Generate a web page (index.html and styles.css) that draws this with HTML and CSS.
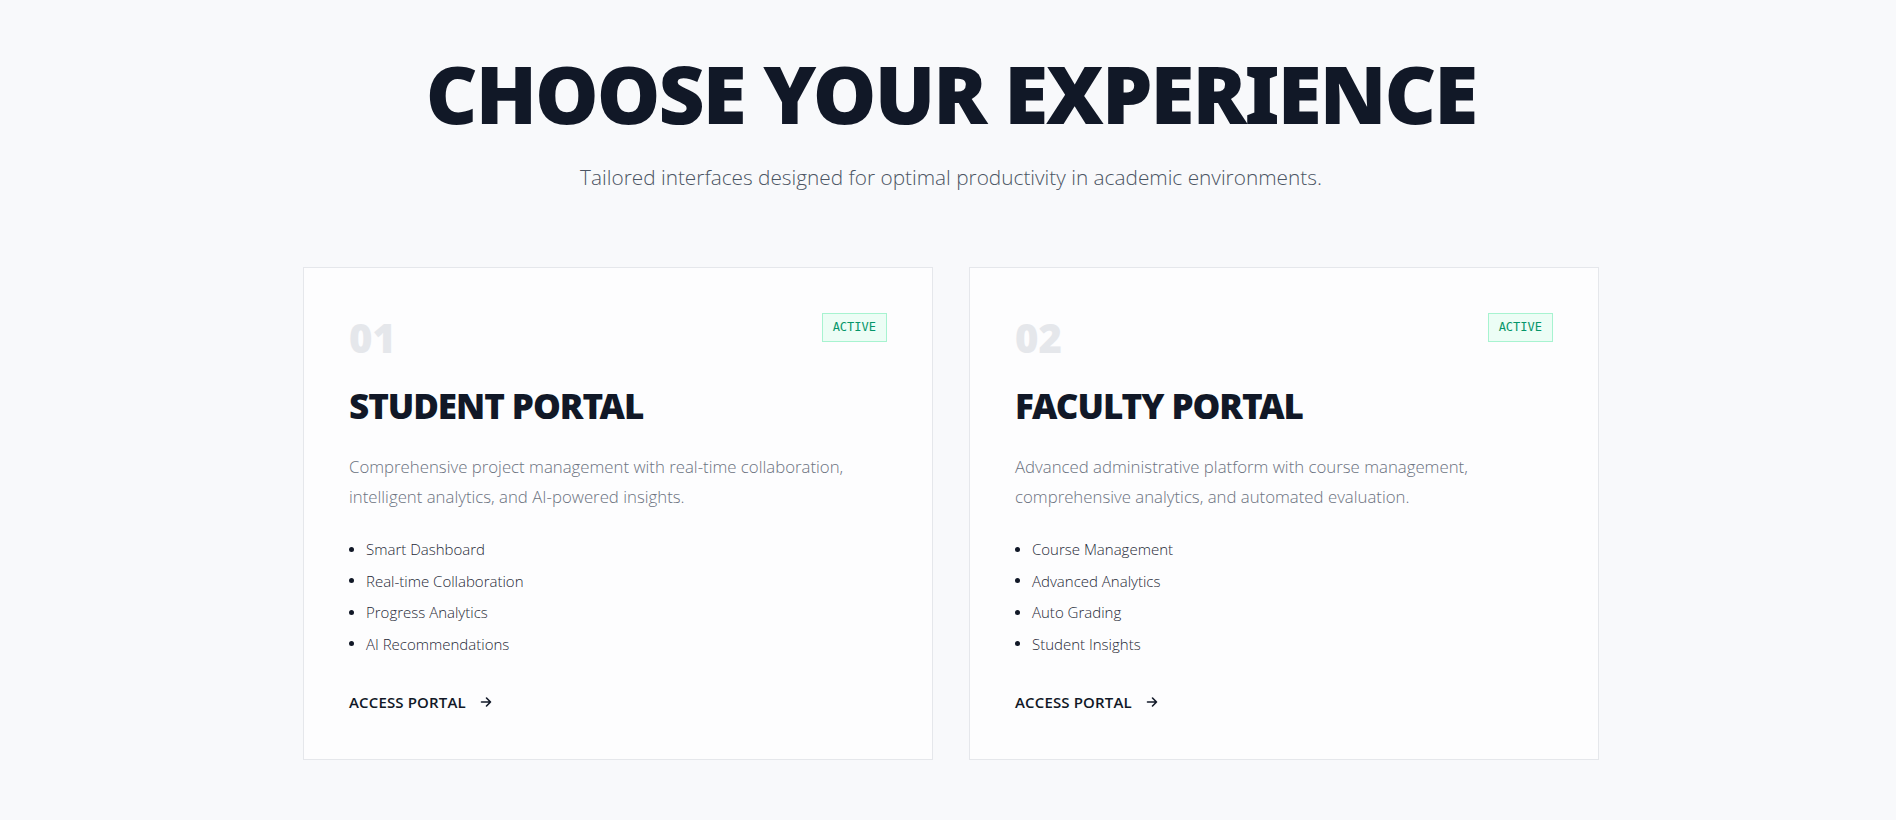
FILE: index.html
```html
<!DOCTYPE html>
<html lang="en">
<head>
<meta charset="utf-8">
<title>Choose Your Experience</title>
<link rel="stylesheet" href="styles.css">
</head>
<body>
<main class="page">
  <header class="intro">
    <h1 class="intro-title">CHOOSE YOUR EXPERIENCE</h1>
    <p class="intro-sub">Tailored interfaces designed for optimal productivity in academic environments.</p>
  </header>
  <section class="cards">
    <article class="card">
      <div class="card-top">
        <span class="card-num">01</span>
        <span class="badge">ACTIVE</span>
      </div>
      <h2 class="card-title">STUDENT PORTAL</h2>
      <p class="card-desc">Comprehensive project management with real-time collaboration, intelligent analytics, and AI-powered insights.</p>
      <ul class="features">
        <li>Smart Dashboard</li>
        <li>Real-time Collaboration</li>
        <li>Progress Analytics</li>
        <li>AI Recommendations</li>
      </ul>
      <a class="access" href="#">ACCESS PORTAL
        <svg class="arrow" width="12" height="12" viewBox="0 0 12 12" fill="none" stroke="currentColor" stroke-width="1.6" stroke-linecap="round" stroke-linejoin="round"><path d="M1.5 6h9M6.5 2l4 4-4 4"/></svg>
      </a>
    </article>
    <article class="card">
      <div class="card-top">
        <span class="card-num">02</span>
        <span class="badge">ACTIVE</span>
      </div>
      <h2 class="card-title">FACULTY PORTAL</h2>
      <p class="card-desc">Advanced administrative platform with course management, comprehensive analytics, and automated evaluation.</p>
      <ul class="features">
        <li>Course Management</li>
        <li>Advanced Analytics</li>
        <li>Auto Grading</li>
        <li>Student Insights</li>
      </ul>
      <a class="access" href="#">ACCESS PORTAL
        <svg class="arrow" width="12" height="12" viewBox="0 0 12 12" fill="none" stroke="currentColor" stroke-width="1.6" stroke-linecap="round" stroke-linejoin="round"><path d="M1.5 6h9M6.5 2l4 4-4 4"/></svg>
      </a>
    </article>
  </section>
</main>
</body>
</html>
```
FILE: styles.css
```css
* { box-sizing: border-box; }
html, body { margin: 0; padding: 0; }
body {
  background: #f8f9fb;
  font-family: "Open Sans", "Noto Sans", sans-serif;
  color: #111827;
  height: 820px;
  overflow: hidden;
}
.page {
  padding: 53px 0 0 6px;
  display: flex;
  flex-direction: column;
  align-items: center;
}
.intro { text-align: center; }
.intro-title {
  margin: 0;
  font-family: "Noto Sans", sans-serif;
  font-weight: 900;
  font-size: 80px;
  line-height: 1;
  letter-spacing: -0.025em;
  color: #111827;
}
.intro-sub {
  margin: 29px 0 0;
  font-weight: 300;
  font-size: 20.8px;
  line-height: 30px;
  color: #4b5563;
}
.cards {
  margin-top: 75px;
  display: grid;
  grid-template-columns: 630px 630px;
  gap: 36px;
}
.card {
  background: #fdfdfe;
  border: 1px solid #e5e7eb;
  padding: 45px;
  height: 493px;
  display: flex;
  flex-direction: column;
}
.card-top {
  display: flex;
  justify-content: space-between;
  align-items: flex-start;
}
.card-num {
  font-family: "Noto Sans", sans-serif;
  font-weight: 900;
  font-size: 40px;
  line-height: 1;
  color: #e5e7eb;
  margin-top: 5px;
}
.badge {
  font-family: "DejaVu Sans Mono", monospace;
  font-size: 12px;
  color: #059669;
  background: #ecfdf5;
  border: 1px solid #a7f3d0;
  padding: 7px 10px;
  line-height: 13px;
}
.card-title {
  margin: 27px 0 0;
  font-family: "Noto Sans", sans-serif;
  font-weight: 900;
  font-size: 35px;
  line-height: 1.2;
  letter-spacing: -0.03em;
  color: #111827;
}
.card-desc {
  margin: 25px 0 0;
  font-weight: 300;
  font-size: 16.8px;
  line-height: 30px;
  color: #6b7280;
}
.features {
  list-style: none;
  margin: 26px 0 0;
  padding: 0;
  display: flex;
  flex-direction: column;
  gap: 9.5px;
}
.features li {
  display: flex;
  align-items: center;
  gap: 12px;
  font-weight: 300;
  font-size: 15px;
  line-height: 22px;
  color: #1f2937;
}
.features li::before {
  content: "";
  width: 5px;
  height: 5px;
  border-radius: 50%;
  background: #111827;
}
.access {
  margin-top: 37px;
  display: inline-flex;
  align-items: center;
  gap: 14px;
  font-weight: 600;
  font-size: 15px;
  color: #111827;
  text-decoration: none;
  letter-spacing: 0.01em;
}
.arrow { display: block; }
```
